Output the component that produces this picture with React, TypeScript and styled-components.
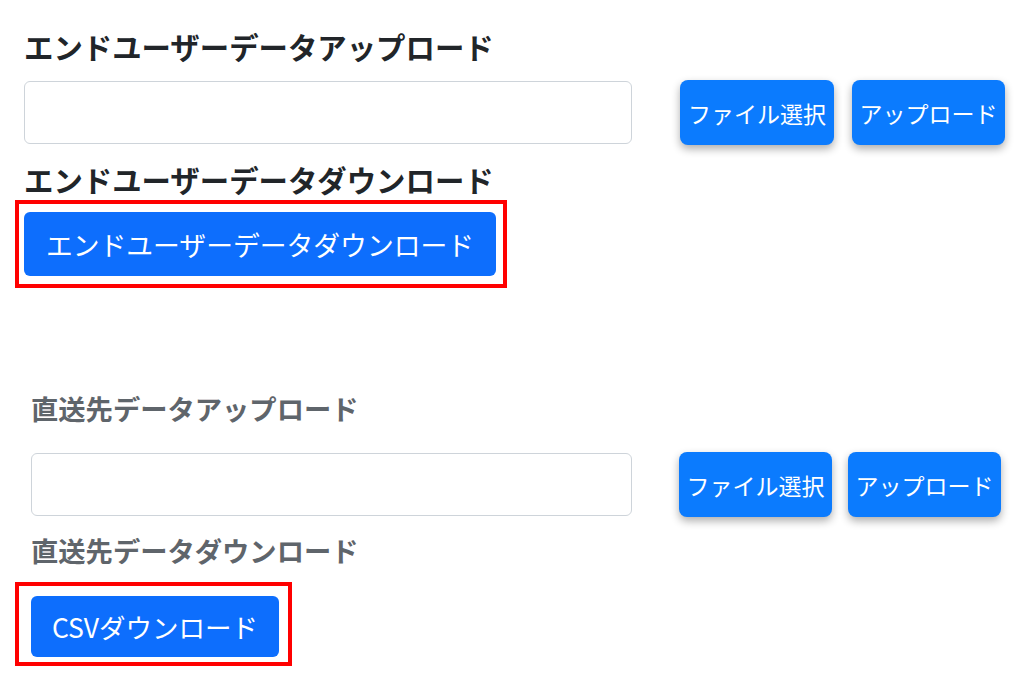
import React from "react";
import styled, { createGlobalStyle } from "styled-components";

const Global = createGlobalStyle`
  html, body { margin: 0; padding: 0; background: #ffffff; }
  body { font-family: "Noto Sans CJK JP", "Noto Sans", sans-serif; }
  * { box-sizing: border-box; }
`;

const Page = styled.div`
  width: 1024px;
  height: 676px;
  overflow: hidden;
  display: flex;
  flex-direction: column;
`;

const Section = styled.section<{ $indent: number; $top: number }>`
  display: flex;
  flex-direction: column;
  align-items: flex-start;
  padding-left: ${(p) => p.$indent}px;
  margin-top: ${(p) => p.$top}px;
`;

const Title = styled.h2<{ $size: number; $muted?: boolean; $top?: number }>`
  margin: ${(p) => p.$top ?? 0}px 0 0 0;
  font-size: ${(p) => p.$size}px;
  line-height: 34px;
  font-weight: 700;
  white-space: nowrap;
  color: ${(p) => (p.$muted ? "#5f656b" : "#212529")};
`;

const Row = styled.div<{ $top: number; $gap: number }>`
  display: flex;
  align-items: center;
  margin-top: ${(p) => p.$top}px;
  gap: ${(p) => p.$gap}px;
`;

const FileInput = styled.div<{ $width: number }>`
  width: ${(p) => p.$width}px;
  height: 63px;
  border: 1px solid #ced4da;
  border-radius: 6px;
  background: #ffffff;
`;

const ButtonGroup = styled.div<{ $gap: number }>`
  display: flex;
  gap: ${(p) => p.$gap}px;
`;

const ActionButton = styled.button<{ $width: number }>`
  width: ${(p) => p.$width}px;
  height: 65px;
  padding: 0;
  border: none;
  border-radius: 8px;
  background: #0b7bfe;
  color: #ffffff;
  font-family: inherit;
  font-size: 23px;
  white-space: nowrap;
  box-shadow: 0 4px 8px rgba(0, 0, 0, 0.32);
  display: flex;
  align-items: center;
  justify-content: center;
`;

const Highlight = styled.div<{ $shift: number; $top: number; $pad: string }>`
  margin-top: ${(p) => p.$top}px;
  margin-left: ${(p) => p.$shift}px;
  border: 4px solid #ff0000;
  padding: ${(p) => p.$pad};
`;

const DownloadButton = styled.button<{ $width: number; $height: number; $size: number }>`
  display: flex;
  align-items: center;
  justify-content: center;
  width: ${(p) => p.$width}px;
  height: ${(p) => p.$height}px;
  padding: 0;
  border: none;
  border-radius: 6px;
  background: #0d6efd;
  color: #ffffff;
  font-family: inherit;
  font-size: ${(p) => p.$size}px;
  white-space: nowrap;
`;

export default function App() {
  return (
    <Page>
      <Global />
      <Section $indent={24} $top={29}>
        <Title $size={29.4}>エンドユーザーデータアップロード</Title>
        <Row $top={17} $gap={48}>
          <FileInput $width={608} />
          <ButtonGroup $gap={18}>
            <ActionButton $width={154}>ファイル選択</ActionButton>
            <ActionButton $width={153}>アップロード</ActionButton>
          </ButtonGroup>
        </Row>
        <Title $size={29.4} $top={17}>エンドユーザーデータダウンロード</Title>
        <Highlight $shift={-9} $top={4} $pad="8px 7px 8px 5px">
          <DownloadButton $width={472} $height={64} $size={26.8}>
            エンドユーザーデータダウンロード
          </DownloadButton>
        </Highlight>
      </Section>
      <Section $indent={31} $top={103}>
        <Title $size={27.3} $muted>直送先データアップロード</Title>
        <Row $top={27} $gap={47}>
          <FileInput $width={601} />
          <ButtonGroup $gap={16}>
            <ActionButton $width={153}>ファイル選択</ActionButton>
            <ActionButton $width={153}>アップロード</ActionButton>
          </ButtonGroup>
        </Row>
        <Title $size={27.3} $muted $top={16}>直送先データダウンロード</Title>
        <Highlight $shift={-16} $top={15} $pad="10px 9px 5px 12px">
          <DownloadButton $width={248} $height={61} $size={26.5}>
            CSVダウンロード
          </DownloadButton>
        </Highlight>
      </Section>
    </Page>
  );
}
